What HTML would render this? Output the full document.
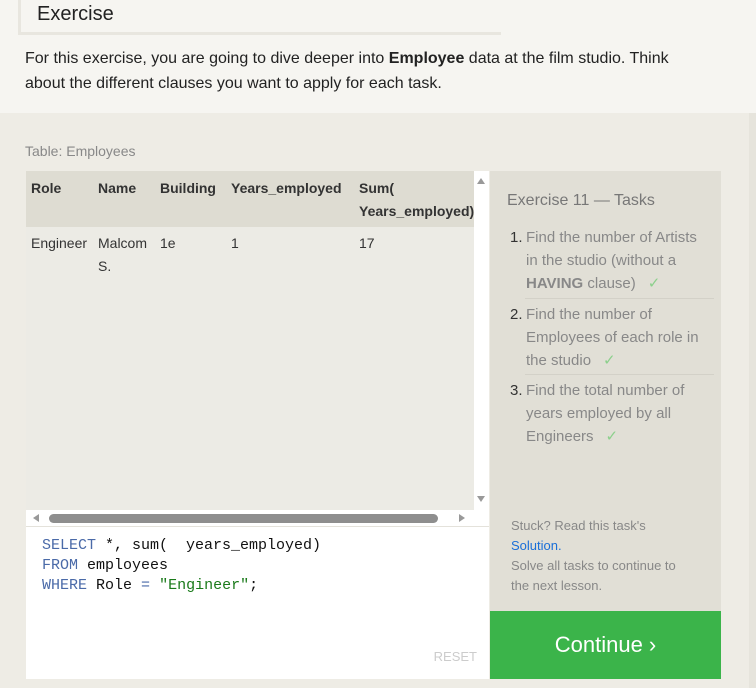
<!DOCTYPE html>
<html><head><style>
body{margin:0;width:756px;height:688px;overflow:hidden;background:#eeece5;font-family:"Liberation Sans",sans-serif;position:relative}
.top{position:absolute;left:0;top:0;width:756px;height:113px;background:#f6f5f1}
.hdr{position:absolute;left:18px;top:-2px;width:480px;height:34px;border-left:3px solid #e8e6df;border-bottom:3px solid #e8e6df;font-size:20px;color:#222;}
.hdr span{position:absolute;left:16px;top:5px}
p{position:absolute;left:25px;top:46px;margin:0;width:720px;font-size:16px;line-height:25px;color:#222}
.lbl{position:absolute;left:25px;top:143px;font-size:14px;color:#888}
.tbl{position:absolute;left:26px;top:171px;width:448px;height:339px;background:#ecebe5;font-size:14px;color:#333;overflow:hidden}
.th{position:absolute;top:0;left:0;width:448px;height:56px;background:#dedcd2}
.c{position:absolute;line-height:23px}
.vs{position:absolute;left:474px;top:171px;width:15px;height:339px;background:#fff}
.hs{position:absolute;left:26px;top:510px;width:463px;height:16px;background:#fff;border-bottom:1px solid #e4e2db}
.thumb{position:absolute;left:23px;top:4px;width:389px;height:9px;border-radius:5px;background:#8e8e8e}
.ed{position:absolute;left:26px;top:527px;width:463px;height:152px;background:#fff;font-family:"Liberation Mono",monospace;font-size:15px;line-height:20px}
.ed pre{margin:0;position:absolute;left:16px;top:9px;font-family:inherit;color:#111}
.k{color:#4a6aa8}.s{color:#1a7a1a}
.reset{position:absolute;right:12px;bottom:12px;font-family:"Liberation Sans",sans-serif;font-size:13px;color:#ccc}
.rp{position:absolute;left:490px;top:171px;width:231px;height:440px;background:#e1dfd6;color:#888;font-size:15px}
.rp h3{position:absolute;left:17px;top:21px;margin:0;font-weight:normal;font-size:16px;color:#777}
.t{position:absolute;left:36px;width:182px;line-height:23px}
.t b{color:#888}
.n{position:absolute;left:-16px;color:#333}
.ck{color:#8cd08c;margin-left:12px}
.sep{position:absolute;left:35px;width:189px;height:1px;background:#d3d1c8}
.st{position:absolute;left:21px;top:345px;font-size:13px;line-height:20px;color:#888}
.st a{color:#1a6fd8}
.cont{position:absolute;left:490px;top:611px;width:231px;height:68px;background:#3bb44a;color:#fff;font-size:22px;text-align:center;line-height:68px}
.edge{position:absolute;left:749px;top:113px;width:7px;height:575px;background:#e6e4dc}
</style></head><body>
<div class="top"></div>
<div class="hdr"><span>Exercise</span></div>
<p>For this exercise, you are going to dive deeper into <b>Employee</b> data at the film studio. Think<br>about the different clauses you want to apply for each task.</p>
<div class="lbl">Table: Employees</div>
<div class="tbl">
<div class="th"></div>
<div class="c" style="left:5px;top:6px;font-weight:bold">Role</div>
<div class="c" style="left:72px;top:6px;font-weight:bold">Name</div>
<div class="c" style="left:134px;top:6px;font-weight:bold">Building</div>
<div class="c" style="left:205px;top:6px;font-weight:bold">Years_employed</div>
<div class="c" style="left:333px;top:6px;font-weight:bold;white-space:nowrap">Sum(<br>Years_employed)</div>
<div class="c" style="left:5px;top:61px">Engineer</div>
<div class="c" style="left:72px;top:61px">Malcom<br>S.</div>
<div class="c" style="left:134px;top:61px">1e</div>
<div class="c" style="left:205px;top:61px">1</div>
<div class="c" style="left:333px;top:61px">17</div>
</div>
<div class="vs"><div style="position:absolute;left:3px;top:7px;border:4px solid transparent;border-bottom:6px solid #999;border-top:0"></div><div style="position:absolute;left:3px;top:325px;border:4px solid transparent;border-top:6px solid #999;border-bottom:0"></div></div>
<div class="hs"><div style="position:absolute;left:7px;top:4px;border:4px solid transparent;border-right:6px solid #999;border-left:0"></div><div class="thumb"></div><div style="position:absolute;left:433px;top:4px;border:4px solid transparent;border-left:6px solid #999;border-right:0"></div></div>
<div class="ed"><pre><span class="k">SELECT</span> *, sum(  years_employed)
<span class="k">FROM</span> employees
<span class="k">WHERE</span> Role <span class="k">=</span> <span class="s">"Engineer"</span>;</pre><div class="reset">RESET</div></div>
<div class="rp">
<h3>Exercise 11 — Tasks</h3>
<div class="t" style="top:55px"><span class="n">1.</span>Find the number of Artists in the studio (without a <b>HAVING</b> clause)<span class="ck">✓</span></div>
<div class="sep" style="top:127px"></div>
<div class="t" style="top:132px"><span class="n">2.</span>Find the number of Employees of each role in the studio<span class="ck">✓</span></div>
<div class="sep" style="top:203px"></div>
<div class="t" style="top:208px"><span class="n">3.</span>Find the total number of years employed by all Engineers<span class="ck">✓</span></div>
<div class="st">Stuck? Read this task's<br><a>Solution.</a><br>Solve all tasks to continue to<br>the next lesson.</div>
</div>
<div class="cont">Continue ›</div>
<div class="edge"></div>
</body></html>
